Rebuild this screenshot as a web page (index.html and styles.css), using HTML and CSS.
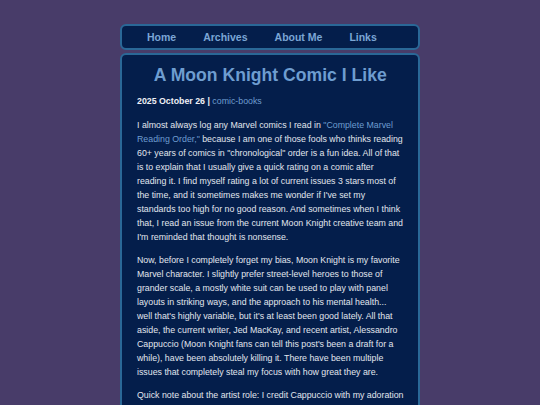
FILE: index.html
```html
<!DOCTYPE html>
<html>
<head>
<meta charset="utf-8">
<link rel="stylesheet" href="styles.css">
</head>
<body>
<div class="page">
  <nav class="nav">
    <a href="#">Home</a>
    <a href="#">Archives</a>
    <a href="#">About Me</a>
    <a href="#">Links</a>
  </nav>
  <main class="main">
    <h1 class="title">A Moon Knight Comic I Like</h1>
    <div class="meta"><b>2025 October 26 |</b> <a href="#">comic-books</a></div>
    <p>I almost always log any Marvel comics I read in <a href="#">"Complete Marvel Reading Order,"</a> because I am one of those fools who thinks reading 60+ years of comics in "chronological" order is a fun idea. All of that is to explain that I usually give a quick rating on a comic after reading it. I find myself rating a lot of current issues 3 stars most of the time, and it sometimes makes me wonder if I've set my standards too high for no good reason. And sometimes when I think that, I read an issue from the current Moon Knight creative team and I'm reminded that thought is nonsense.</p>
    <p>Now, before I completely forget my bias, Moon Knight is my favorite Marvel character. I slightly prefer street-level heroes to those of grander scale, a mostly white suit can be used to play with panel layouts in striking ways, and the approach to his mental health... well that's highly variable, but it's at least been good lately. All that aside, the current writer, Jed MacKay, and recent artist, Alessandro Cappuccio (Moon Knight fans can tell this post's been a draft for a while), have been absolutely killing it. There have been multiple issues that completely steal my focus with how great they are.</p>
    <p>Quick note about the artist role: I credit Cappuccio with my adoration of the series, though the colorist and letterer deserve credit too.</p>
  </main>
</div>
</body>
</html>
```
FILE: styles.css
```css
html, body {
  margin: 0;
  padding: 0;
  height: 100%;
  overflow: hidden;
}
body {
  background: #483c69;
  font-family: "Liberation Sans", Arial, sans-serif;
  color: #e2e6ee;
}
.page {
  width: 300px;
  margin: 24px auto 0;
  display: flex;
  flex-direction: column;
  gap: 3px;
}
.nav {
  box-sizing: border-box;
  height: 26px;
  background: #041e4b;
  border: 2px solid #2a6897;
  border-radius: 6px;
  display: flex;
  align-items: center;
  padding-left: 25px;
  gap: 27px;
}
.nav a {
  color: #7ba6d5;
  font-weight: bold;
  font-size: 10.5px;
  line-height: 12px;
  text-decoration: none;
}
.main {
  background: #041e4b;
  border: 2px solid #2a6897;
  border-radius: 6px;
  padding: 0 14.5px 10px 15px;
}
.title {
  margin: 8px 0 0;
  text-align: center;
  color: #6e9dd0;
  font-size: 17.6px;
  line-height: 24px;
}
.meta {
  margin-top: 7px;
  font-size: 8.8px;
  line-height: 14px;
  color: #eef0f5;
}
a { color: #6e9dd0; text-decoration: none; }
p {
  margin: 9px 0 0;
  font-size: 8.8px;
  line-height: 14px;
}
.meta + p { margin-top: 10px; }
```
